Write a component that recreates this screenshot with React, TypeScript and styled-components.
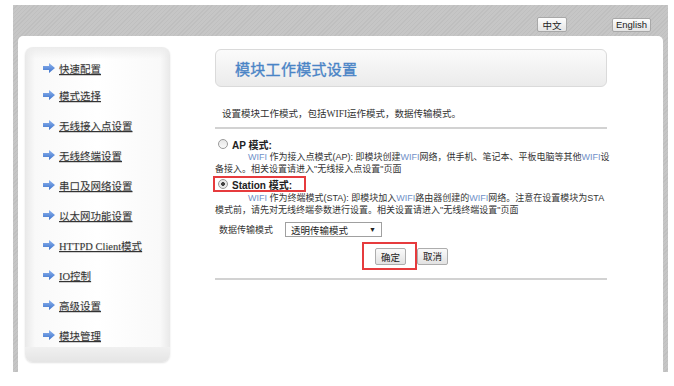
import React from "react";
import styled, { createGlobalStyle } from "styled-components";

const Global = createGlobalStyle`
  html, body { margin: 0; padding: 0; background: #fff; }
  body { font-family: "Liberation Sans", "Noto Sans CJK SC", sans-serif; color: #333; }
`;

const Frame = styled.div`
  margin: 5px 0 0 13px;
  width: 655px;
  height: 367px;
  display: flex;
  flex-direction: column;
  background: repeating-linear-gradient(-45deg, #c6c6c6 0 2px, #bfbfbf 2px 3px);
`;

const TopBar = styled.div`
  height: 31px;
  box-sizing: border-box;
  padding: 8px 17px 0 0;
  display: flex;
  align-items: center;
  justify-content: flex-end;
  gap: 45px;
`;

const LangButton = styled.button<{ $w: number; $h: number }>`
  width: ${(p) => p.$w}px;
  height: ${(p) => p.$h}px;
  padding: 0;
  font: 9.5px "Liberation Sans", "Noto Sans CJK SC", sans-serif;
  color: #222;
  border: 1px solid #a8a8a8;
  border-radius: 2px;
  background: linear-gradient(#fdfdfd, #e4e4e4);
`;

const Panel = styled.div`
  flex: 1;
  margin: 0 5px;
  background: #fff;
  border-radius: 5px 5px 0 0;
  display: flex;
  align-items: flex-start;
  padding: 11px 0 0 7px;
`;

const Sidebar = styled.nav`
  width: 145px;
  height: 315px;
  box-sizing: border-box;
  padding-top: 9px;
  border-radius: 8px;
  background:
    linear-gradient(to bottom, transparent calc(100% - 15px), #f0f0f0 calc(100% - 15px), #e5e5e5 100%),
    linear-gradient(to bottom, #ececec 0, rgba(255,255,255,0) 12px),
    linear-gradient(to right, #e9e9e9 0, #f9f9f9 10px, #fff 50%, #f9f9f9 calc(100% - 10px), #e9e9e9 100%);
  box-shadow: 0 1px 2px rgba(0, 0, 0, 0.12);
`;

const NavItem = styled.div`
  height: 30px;
  display: flex;
  align-items: center;
  gap: 4px;
  padding-left: 18px;
  &:first-child { height: 24px; }
`;

const NavLink = styled.a`
  font: 10.5px "Liberation Serif", "Noto Sans CJK SC", serif;
  color: #333;
  text-decoration: underline;
  text-shadow: 0 1px 1px rgba(0, 0, 0, 0.18);
  white-space: nowrap;
`;

const Content = styled.main`
  width: 392px;
  margin: 2px 0 0 45px;
  display: flex;
  flex-direction: column;
`;

const HeaderBox = styled.div`
  height: 38px;
  box-sizing: border-box;
  border: 1px solid #dadada;
  border-radius: 6px;
  background: linear-gradient(#fbfbfb, #ebebeb);
  display: flex;
  align-items: center;
  padding-left: 19px;
`;

const Title = styled.h1`
  margin: 0;
  font: normal 15px "Noto Sans CJK SC", sans-serif;
  -webkit-text-stroke: 0.35px #4a84c6;
  color: #4a84c6;
  letter-spacing: 0.3px;
`;

const Intro = styled.p`
  margin: 19px 0 0 7px;
  line-height: 14px;
  font: 9.5px "Liberation Serif", "Noto Sans CJK SC", serif;
  color: #333;
`;

const Rule = styled.hr<{ $top: number }>`
  margin: ${(p) => p.$top}px 0 0;
  border: 0;
  border-top: 2px solid #d2d2d2;
  height: 0;
`;

const ModeRow = styled.label<{ $boxed?: boolean; $top: number }>`
  align-self: flex-start;
  display: flex;
  align-items: center;
  gap: 4px;
  margin-top: ${(p) => p.$top}px;
  height: 12px;
  padding: ${(p) => (p.$boxed ? "0 12px 0 3px" : "0 0 0 3px")};
  margin-left: ${(p) => (p.$boxed ? "-2px" : "0")};
  border: ${(p) => (p.$boxed ? "2px solid #e63b3d" : "0")};
  font: bold 10px "Liberation Sans", "Noto Sans CJK SC", sans-serif;
  color: #222;
`;

const Radio = styled.span<{ $on?: boolean }>`
  width: 8px;
  height: 8px;
  border-radius: 50%;
  border: 1px solid #9a9a9a;
  background: ${(p) =>
    p.$on
      ? "radial-gradient(circle, #444 0 1.6px, #e8e8e8 2.2px)"
      : "linear-gradient(#e6e6e6, #fafafa)"};
  flex: none;
`;

const ModeDesc = styled.p<{ $top: number }>`
  margin: ${(p) => p.$top}px 0 0;
  text-indent: 33px;
  font: 9px "Liberation Sans", "Noto Sans CJK SC", sans-serif;
  line-height: 12px;
  color: #333;
  white-space: nowrap;
`;

const Wifi = styled.span`
  color: #7090c8;
`;

const FieldRow = styled.div`
  margin-top: 6px;
  display: flex;
  align-items: center;
  gap: 12px;
  padding-left: 4px;
  font: 9px "Liberation Sans", "Noto Sans CJK SC", sans-serif;
  color: #333;
`;

const Select = styled.div`
  width: 97px;
  height: 15px;
  box-sizing: border-box;
  border: 1px solid #a0a0a0;
  background: #fff;
  display: flex;
  align-items: center;
  justify-content: space-between;
  padding: 0 5px 0 5px;
  font: 9.5px "Liberation Sans", "Noto Sans CJK SC", sans-serif;
  color: #222;
`;

const Caret = styled.span`
  font-size: 7px;
  color: #222;
`;

const ButtonRow = styled.div`
  margin: 5px 0 0 147px;
  display: flex;
  align-items: center;
`;

const Highlight = styled.div`
  border: 2px solid #e63b3d;
  padding: 4px 9px 3px 11px;
  display: flex;
`;

const ActionButton = styled.button`
  width: 31px;
  height: 17px;
  padding: 0;
  font: 9.5px "Noto Sans CJK SC", sans-serif;
  color: #222;
  border: 1px solid #adadad;
  border-radius: 2px;
  background: linear-gradient(#fafafa, #e2e2e2);
`;

const Arrow = () => (
  <svg width="12" height="10" viewBox="0 0 12 10">
    <defs>
      <linearGradient id="ag" x1="0" y1="0" x2="0" y2="1">
        <stop offset="0" stopColor="#8fb4ee" />
        <stop offset="1" stopColor="#3c72cc" />
      </linearGradient>
    </defs>
    <path d="M0 3 H6 V0 L12 5 L6 10 V7 H0 Z" fill="url(#ag)" />
  </svg>
);

const navItems = [
  "快速配置",
  "模式选择",
  "无线接入点设置",
  "无线终端设置",
  "串口及网络设置",
  "以太网功能设置",
  "HTTPD Client模式",
  "IO控制",
  "高级设置",
  "模块管理",
];

export default function App() {
  return (
    <>
      <Global />
      <Frame>
        <TopBar>
          <LangButton $w={30} $h={15}>中文</LangButton>
          <LangButton $w={39} $h={14}>English</LangButton>
        </TopBar>
        <Panel>
          <Sidebar>
            {navItems.map((t) => (
              <NavItem key={t}>
                <Arrow />
                <NavLink>{t}</NavLink>
              </NavItem>
            ))}
          </Sidebar>
          <Content>
            <HeaderBox>
              <Title>模块工作模式设置</Title>
            </HeaderBox>
            <Intro>设置模块工作模式，包括WIFI运作模式，数据传输模式。</Intro>
            <Rule $top={7} />
            <ModeRow $top={9}>
              <Radio />
              AP 模式:
            </ModeRow>
            <ModeDesc $top={1}>
              <Wifi>WIFI</Wifi> 作为接入点模式(AP): 即模块创建<Wifi>WIFI</Wifi>网络，供手机、笔记本、平板电脑等其他<Wifi>WIFI</Wifi>设
              <br />
              备接入。相关设置请进入"无线接入点设置"页面
            </ModeDesc>
            <ModeRow $boxed $top={1}>
              <Radio $on />
              Station 模式:
            </ModeRow>
            <ModeDesc $top={0}>
              <Wifi>WIFI</Wifi> 作为终端模式(STA): 即模块加入<Wifi>WIFI</Wifi>路由器创建的<Wifi>WIFI</Wifi>网络。注意在设置模块为STA
              <br />
              模式前，请先对无线终端参数进行设置。相关设置请进入"无线终端设置"页面
            </ModeDesc>
            <FieldRow>
              <span>数据传输模式</span>
              <Select>
                <span>透明传输模式</span>
                <Caret>▼</Caret>
              </Select>
            </FieldRow>
            <ButtonRow>
              <Highlight>
                <ActionButton>确定</ActionButton>
              </Highlight>
              <ActionButton>取消</ActionButton>
            </ButtonRow>
            <Rule $top={8} />
          </Content>
        </Panel>
      </Frame>
    </>
  );
}
